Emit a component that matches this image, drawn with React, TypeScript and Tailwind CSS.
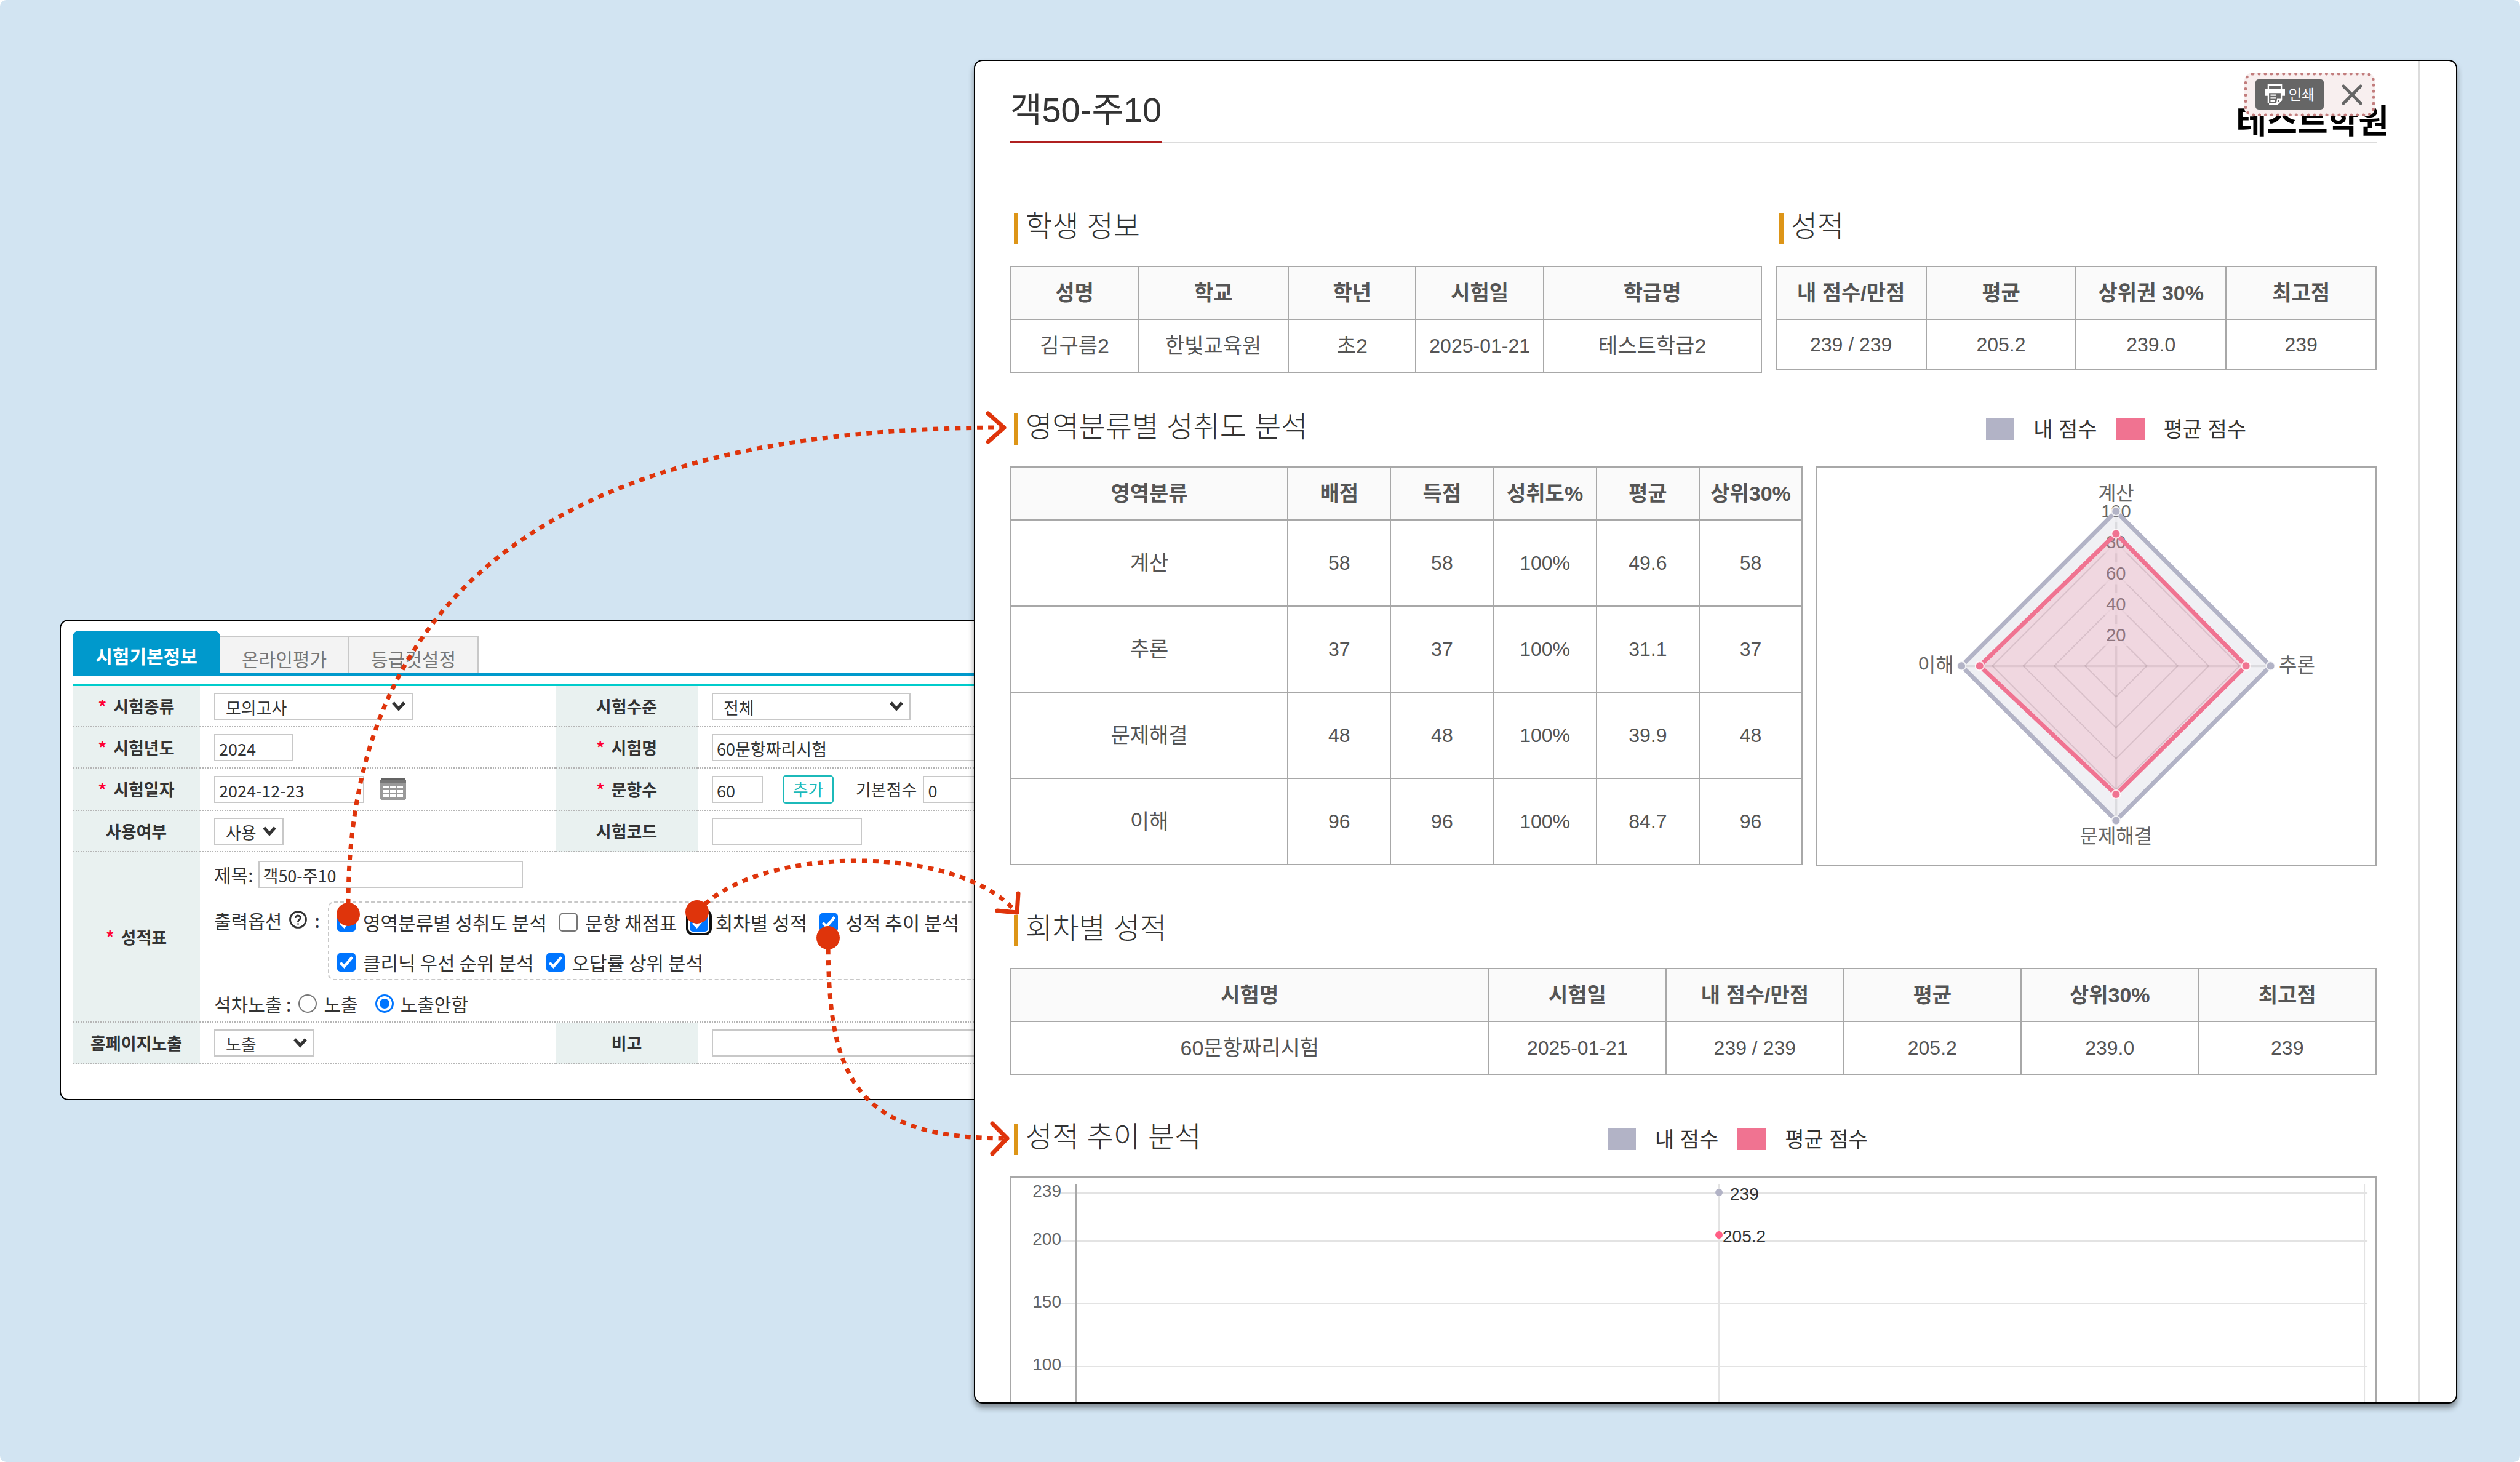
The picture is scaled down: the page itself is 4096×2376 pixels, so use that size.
import type { ReactNode } from "react";

const TABS = ["온라인평가", "등급컷설정"];

function Chevron() {
  return (
    <svg viewBox="0 0 22 16" className="pointer-events-none absolute right-[12px] top-1/2 h-[16px] w-[22px] -translate-y-1/2" fill="none" stroke="#333" strokeWidth="5">
      <path d="M2 2 L11 12 L20 2" />
    </svg>
  );
}

function SelectBox({ id, value, width }: { id: string; value: string; width: string }) {
  return (
    <span className={`relative inline-block align-middle ${width}`}>
      <select id={id} defaultValue={value} className="block h-[44px] w-full appearance-none border-2 border-[#c8c8c8] bg-white pl-[17px] pt-[4px] leading-[36px] text-[#333]">
        <option>{value}</option>
      </select>
      <Chevron />
    </span>
  );
}

function TextBox({ id, value = "", width, label }: { id: string; value?: string; width: string; label?: string }) {
  return (
    <input
      id={id}
      type="text"
      aria-label={label}
      defaultValue={value}
      className={`block h-[44px] border-2 border-[#c8c8c8] bg-white px-[6px] pt-[4px] text-[#333] ${width}`}
    />
  );
}

function FieldHead({ htmlFor, required, children }: { htmlFor: string; required?: boolean; children: ReactNode }) {
  return (
    <th scope="row" className="border-b-2 border-dotted border-[#b5b5b5] bg-[#e9f1f0] p-0 text-center align-middle font-bold">
      <label htmlFor={htmlFor} className="inline-flex items-center gap-[11px]">
        {required && <span className="text-[#ff0033]">*</span>}
        {children}
      </label>
    </th>
  );
}

function FieldCell({ span, children }: { span?: number; children?: ReactNode }) {
  return (
    <td colSpan={span} className="border-b-2 border-dotted border-[#b5b5b5] p-0 pl-[23px] align-middle">
      {children}
    </td>
  );
}

function Check({ label, checked, focused }: { label: string; checked?: boolean; focused?: boolean }) {
  return (
    <label className="flex items-center gap-[12px]">
      <span className="relative block size-[30px]">
        <input
          type="checkbox"
          defaultChecked={checked}
          className={`peer block size-[30px] appearance-none rounded-[5px] border-2 border-[#767676] bg-white checked:border-[#0075ff] checked:bg-[#0075ff] ${focused ? "outline-4 outline-offset-2 outline-[#101010]" : ""}`}
        />
        <svg viewBox="0 0 13 13" className="pointer-events-none absolute inset-0 hidden size-[30px] peer-checked:block" fill="none" stroke="#fff" strokeWidth="1.9">
          <path d="M2.3 6.8 L5 9.4 L10.6 2.8" />
        </svg>
      </span>
      {label}
    </label>
  );
}

function Radio({ label, checked }: { label: string; checked?: boolean }) {
  return (
    <label className="flex items-center gap-[11px]">
      <span className="relative block size-[30px]">
        <input type="radio" name="rank" defaultChecked={checked} className="peer block size-[30px] appearance-none rounded-full border-2 border-[#767676] bg-white checked:border-[3px] checked:border-[#0075ff]" />
        <span className="pointer-events-none absolute inset-[7px] hidden rounded-full bg-[#0075ff] peer-checked:block" />
      </span>
      {label}
    </label>
  );
}

function CalendarIcon() {
  return (
    <svg viewBox="0 0 18 15" className="h-[35px] w-[42px]" shapeRendering="crispEdges">
      <path d="M1 0h16v1h-16z" fill="#636363" />
      <path d="M0 1h18v2h-18z" fill="#777" />
      <path d="M0 3h18v11h-1v1h-16v-1h-1z" fill="#999" />
      {[5, 8, 11].map((y) => [2, 7, 12].map((x) => <rect key={`${x}-${y}`} x={x} y={y} width="4" height="2" fill="#fff" />))}
    </svg>
  );
}

function ExamForm() {
  return (
    <section className="mt-[910px] w-[38.13%] shrink-0 self-start overflow-hidden rounded-l-[14px] border-2 border-r-0 border-black bg-white pb-[57px] pl-[19px] pt-[16px] font-['Noto_Sans_CJK_KR',sans-serif] text-[27px] leading-[36px] text-[#333]">
      <nav className="flex h-[74px] items-end border-b-[5px] border-[#0099cc] text-[30px] leading-[40px]">
        <button type="button" className="-mb-[5px] h-[74px] w-[240px] rounded-t-[10px] bg-[#0099cc] pt-[6px] font-bold text-white">
          시험기본정보
        </button>
        {TABS.map((t) => (
          <button key={t} type="button" className="h-[60px] w-[210px] border-r-2 border-t-2 border-[#c8c8c8] bg-[#f3f3f3] pt-[10px] text-[#777]">
            {t}
          </button>
        ))}
      </nav>
      <table className="mt-[12px] w-full table-fixed border-separate border-spacing-0 whitespace-nowrap border-t-4 border-[#00cccc]">
        <colgroup>
          <col className="w-[207px]" />
          <col className="w-[578px]" />
          <col className="w-[231px]" />
          <col />
        </colgroup>
        <tbody>
          <tr className="h-[67px]">
            <FieldHead htmlFor="kind" required>시험종류</FieldHead>
            <FieldCell><SelectBox id="kind" value="모의고사" width="w-[323px]" /></FieldCell>
            <FieldHead htmlFor="level">시험수준</FieldHead>
            <FieldCell><SelectBox id="level" value="전체" width="w-[323px]" /></FieldCell>
          </tr>
          <tr className="h-[67px]">
            <FieldHead htmlFor="year" required>시험년도</FieldHead>
            <FieldCell><TextBox id="year" value="2024" width="w-[129px]" /></FieldCell>
            <FieldHead htmlFor="name" required>시험명</FieldHead>
            <FieldCell><div className="overflow-hidden"><TextBox id="name" value="60문항짜리시험" width="w-[600px]" /></div></FieldCell>
          </tr>
          <tr className="h-[69px]">
            <FieldHead htmlFor="date" required>시험일자</FieldHead>
            <FieldCell>
              <div className="flex items-center gap-[26px]">
                <TextBox id="date" value="2024-12-23" width="w-[244px]" />
                <button type="button" aria-label="달력"><CalendarIcon /></button>
              </div>
            </FieldCell>
            <FieldHead htmlFor="count" required>문항수</FieldHead>
            <FieldCell>
              <div className="flex items-center overflow-hidden">
                <TextBox id="count" value="60" width="w-[83px] shrink-0" />
                <button type="button" className="ml-[32px] h-[46px] w-[83px] shrink-0 rounded-[5px] border-2 border-[#1cb9b9] text-[#1cb9b9]">추가</button>
                <label htmlFor="base" className="ml-[36px] mr-[10px]">기본점수</label>
                <TextBox id="base" value="0" width="w-[129px] shrink-0" />
              </div>
            </FieldCell>
          </tr>
          <tr className="h-[67px]">
            <FieldHead htmlFor="use">사용여부</FieldHead>
            <FieldCell><SelectBox id="use" value="사용" width="w-[113px]" /></FieldCell>
            <FieldHead htmlFor="code">시험코드</FieldHead>
            <FieldCell><TextBox id="code" width="w-[244px]" /></FieldCell>
          </tr>
          <tr className="h-[277px]">
            <FieldHead htmlFor="title" required>성적표</FieldHead>
            <FieldCell span={3}>
              <div className="flex flex-col">
                <div className="flex items-center gap-[8px]">
                  <span className="text-[30px]">제목:</span>
                  <TextBox id="title" value="객50-주10" width="w-[430px]" />
                </div>
                <div className="mt-[22px] flex items-start text-[30px] leading-[44px]">
                  <div className="mt-[8px] flex w-[185px] shrink-0 items-center gap-[12px]">
                    출력옵션
                    <svg viewBox="1 1 22 22" className="size-[29px]" fill="none" stroke="#333" strokeWidth="2.2" strokeLinecap="round">
                      <circle cx="12" cy="12" r="9.8" />
                      <path d="M9.1 9a3 3 0 0 1 5.8 1c0 2-2.9 2.4-2.9 4.2" />
                      <path d="M12 17.4h.01" />
                    </svg>
                    :
                  </div>
                  <div className="flex min-w-0 flex-1 flex-col gap-[35px] overflow-hidden rounded-l-[10px] border-2 border-r-0 border-dashed border-[#c8c8c8] pb-[12px] pl-[13px] pt-[17px] text-[31px] leading-[30px]">
                    <div className="flex gap-[20px]">
                      <Check label="영역분류별 성취도 분석" checked />
                      <Check label="문항 채점표" />
                      <Check label="회차별 성적" checked focused />
                      <Check label="성적 추이 분석" checked />
                    </div>
                    <div className="flex gap-[20px]">
                      <Check label="클리닉 우선 순위 분석" checked />
                      <Check label="오답률 상위 분석" checked />
                    </div>
                  </div>
                </div>
                <div className="mt-[22px] flex items-center gap-[28px] text-[30px] leading-[32px]">
                  <div className="flex items-center gap-[12px]">
                    석차노출 :
                    <Radio label="노출" />
                  </div>
                  <Radio label="노출안함" checked />
                </div>
              </div>
            </FieldCell>
          </tr>
          <tr className="h-[67px]">
            <FieldHead htmlFor="home">홈페이지노출</FieldHead>
            <FieldCell><SelectBox id="home" value="노출" width="w-[163px]" /></FieldCell>
            <FieldHead htmlFor="memo">비고</FieldHead>
            <FieldCell><div className="overflow-hidden"><TextBox id="memo" width="w-[600px]" /></div></FieldCell>
          </tr>
        </tbody>
      </table>
    </section>
  );
}

function Heading({ children }: { children: ReactNode }) {
  return (
    <h2 className="ml-[6px] flex h-[51px] gap-[12px] whitespace-nowrap text-[47px] font-light leading-[44px] text-[#333]">
      <span className="h-[51px] w-[7px] bg-[#dd9517]" />
      {children}
    </h2>
  );
}

function Legend() {
  return (
    <ul className="flex h-[51px] items-center gap-[31px] whitespace-nowrap text-[34px] leading-[40px] text-[#333]">
      <li className="flex items-center gap-[31px]">
        <span className="h-[35px] w-[46px] bg-[#b2b3c6]" />내 점수
      </li>
      <li className="flex items-center gap-[31px]">
        <span className="h-[35px] w-[46px] bg-[#f07391]" />평균 점수
      </li>
    </ul>
  );
}

function Grid({ cols, head, rows, rowHeight }: { cols: string[]; head: string[]; rows: string[][]; rowHeight: string }) {
  return (
    <table className="w-full table-fixed border-collapse whitespace-nowrap text-center text-[#555]">
      <colgroup>
        {cols.map((c, i) => <col key={i} className={c} />)}
      </colgroup>
      <thead>
        <tr className="h-[86px] bg-[#fafafa] text-[34px] leading-[40px]">
          {head.map((h) => <th key={h} scope="col" className="border-2 border-[#a8a8a8] p-0 font-bold">{h}</th>)}
        </tr>
      </thead>
      <tbody>
        {rows.map((r) => (
          <tr key={r[0]} className={rowHeight}>
            {r.map((c, i) => (
              <td key={i} className={`border-2 border-[#a8a8a8] p-0 leading-[40px] ${/[가-힣]/.test(c) ? "text-[34px]" : "text-[32px]"}`}>{c}</td>
            ))}
          </tr>
        ))}
      </tbody>
    </table>
  );
}

const CX = 485;
const CY = 322;
const R = 251;
const diamond = (v: number[]) =>
  `${CX},${CY - R * v[0]} ${CX + R * v[1]},${CY} ${CX},${CY + R * v[2]} ${CX - R * v[3]},${CY}`;
const corners = (v: number[]) => [
  [CX, CY - R * v[0]],
  [CX + R * v[1], CY],
  [CX, CY + R * v[2]],
  [CX - R * v[3], CY],
];

function RadarChart() {
  const mine = [1, 1, 1, 1];
  const avg = [0.855, 0.841, 0.831, 0.882];
  return (
    <svg viewBox="0 0 906 646" className="block w-full">
      <g fill="none" stroke="#000" strokeOpacity="0.14" strokeWidth="2">
        {[0.2, 0.4, 0.6, 0.8, 1].map((s) => <polygon key={s} points={diamond([s, s, s, s])} />)}
        <path strokeWidth="4" strokeOpacity="0.1" d={`M${CX} ${CY - R}V${CY + R}M${CX - R} ${CY}H${CX + R}`} />
      </g>
      <g textAnchor="middle" fontSize="29" fill="#666">
        {[20, 40, 60, 80, 100].map((n) => (
          <g key={n}>
            <rect x={CX - 20} y={CY - (R * n) / 100 - 18} width="40" height="36" fill="#fff" fillOpacity="0.75" />
            <text x={CX} y={CY - (R * n) / 100 + 10}>{n}</text>
          </g>
        ))}
      </g>
      <g strokeLinejoin="round" strokeWidth="7">
        <polygon points={diamond(mine)} fill="#b2b3c6" fillOpacity="0.2" stroke="#b2b3c6" />
        <polygon points={diamond(avg)} fill="#f07391" fillOpacity="0.2" stroke="#f07391" />
      </g>
      <g stroke="#fff" strokeOpacity="0.8" strokeWidth="2">
        {corners(mine).map(([x, y], i) => <circle key={i} cx={x} cy={y} r="7" fill="#b2b3c6" />)}
        {corners(avg).map(([x, y], i) => <circle key={i} cx={x} cy={y} r="7" fill="#f07391" />)}
      </g>
      <g textAnchor="middle" fontSize="32" fill="#666">
        <text x={CX} y="53">계산</text>
        <text x={CX} y="610">문제해결</text>
        <text x="192" y="332">이해</text>
        <text x="779" y="332">추론</text>
      </g>
    </svg>
  );
}

function TrendChart() {
  const ticks: [number, string][] = [[25, "239"], [103, "200"], [205, "150"], [307, "100"]];
  return (
    <svg viewBox="0 0 2217 560" className="block w-full" fontSize="28">
      <g stroke="#e3e3e3" strokeWidth="2">
        {ticks.map(([y]) => <path key={y} d={`M81 ${y}H2204`} />)}
        <path d="M1150 10V511M2199 10V511" />
      </g>
      <path d="M105 10V511" stroke="#a8a8a8" strokeWidth="2" />
      <g fill="#666" textAnchor="end">
        {ticks.map(([y, t]) => <text key={t} x="81" y={y + 6}>{t}</text>)}
      </g>
      <circle cx="1150" cy="24" r="6" fill="#b2b3c6" />
      <circle cx="1150" cy="93" r="6" fill="#ff5f85" />
      <g fill="#333">
        <text x="1168" y="36">239</text>
        <text x="1156" y="105">205.2</text>
      </g>
    </svg>
  );
}

function PrintIcon() {
  return (
    <svg viewBox="0 0 14 14" className="size-[33px]">
      <path d="M2 0h10v3h2v5h-2v3l-3 3h-6v-1h-1v-5h-2v-5h2z" fill="#fff" />
      <path d="M3 1h8v2h-8zM3 6h8v4h-2.5l-.5 3h-5z" fill="#666" />
      <path d="M4 7h4v1h-4zM4 9h4v1h-4zM4 11h3v1h-3z" fill="#fff" />
      <path d="M9 11h1v1h-1z" fill="#666" />
    </svg>
  );
}

function Report() {
  const w = "w-[13%]";
  return (
    <section className="min-w-0 flex-1 overflow-hidden rounded-[14px] border-2 border-black bg-white font-['Liberation_Sans','Noto_Sans_CJK_KR',sans-serif] shadow-[0_7px_10px_rgba(0,0,0,0.4)]">
      <div className="mr-[59px] h-full border-r-2 border-[#dcdcdc] pl-[57px] pr-[68px]">
        <header className="relative flex items-end justify-between border-b-2 border-[#dcdcdc] pt-[30px]">
          <h1 className="-mb-[2px] h-[104px] whitespace-nowrap border-b-4 border-[#b02020] text-[56px] leading-[100px] text-[#333]">객50-주10</h1>
          <strong className="-mr-[20px] mb-[3px] whitespace-nowrap text-[54px] leading-[60px] text-black">테스트학원</strong>
          <div className="absolute right-[3px] top-[19px] flex h-[71px] w-[212px] items-center justify-between rounded-[14px] border-[5px] border-dotted border-[#c27d7d] bg-[#f8efef] pl-[13px] pr-[15px]">
            <button type="button" className="flex h-[49px] w-[111px] items-center justify-center gap-[6px] rounded-[5px] bg-[#666] text-[23px] leading-[32px] text-white">
              <PrintIcon />
              인쇄
            </button>
            <button type="button" aria-label="닫기">
              <svg viewBox="0 0 14 14" className="size-[34px]" stroke="#666" strokeWidth="2" strokeLinecap="round">
                <path d="M1.2 1.2L12.8 12.8M12.8 1.2L1.2 12.8" />
              </svg>
            </button>
          </div>
        </header>

        <div className="mt-[113px] flex items-start justify-between">
          <div className="w-[55%]">
            <Heading>학생 정보</Heading>
            <div className="mt-[35px]">
              <Grid
                cols={["w-[17%]", "w-[20%]", "w-[17%]", "w-[17%]", "w-[29%]"]}
                head={["성명", "학교", "학년", "시험일", "학급명"]}
                rows={[["김구름2", "한빛교육원", "초2", "2025-01-21", "테스트학급2"]]}
                rowHeight="h-[86px]"
              />
            </div>
          </div>
          <div className="w-[44%]">
            <Heading>성적</Heading>
            <div className="mt-[35px]">
              <Grid
                cols={["w-1/4", "w-1/4", "w-1/4", "w-1/4"]}
                head={["내 점수/만점", "평균", "상위권 30%", "최고점"]}
                rows={[["239 / 239", "205.2", "239.0", "239"]]}
                rowHeight="h-[82px]"
              />
            </div>
          </div>
        </div>

        <div className="mt-[66px] flex items-start justify-between">
          <div className="w-[58%]">
            <Heading>영역분류별 성취도 분석</Heading>
            <div className="mt-[35px]">
              <Grid
                cols={["w-[35%]", w, w, w, w, w]}
                head={["영역분류", "배점", "득점", "성취도%", "평균", "상위30%"]}
                rows={[
                  ["계산", "58", "58", "100%", "49.6", "58"],
                  ["추론", "37", "37", "100%", "31.1", "37"],
                  ["문제해결", "48", "48", "100%", "39.9", "48"],
                  ["이해", "96", "96", "100%", "84.7", "96"],
                ]}
                rowHeight="h-[140px]"
              />
            </div>
          </div>
          <div className="w-[41%]">
            <div className="flex justify-center pl-[64px]"><Legend /></div>
            <div className="mt-[35px] border-2 border-[#a8a8a8]"><RadarChart /></div>
          </div>
        </div>

        <div className="mt-[79px]">
          <Heading>회차별 성적</Heading>
          <div className="mt-[35px]">
            <Grid
              cols={["w-[35%]", w, w, w, w, w]}
              head={["시험명", "시험일", "내 점수/만점", "평균", "상위30%", "최고점"]}
              rows={[["60문항짜리시험", "2025-01-21", "239 / 239", "205.2", "239.0", "239"]]}
              rowHeight="h-[86px]"
            />
          </div>
        </div>

        <div className="mt-[79px]">
          <div className="flex">
            <div className="w-[971px]"><Heading>성적 추이 분석</Heading></div>
            <Legend />
          </div>
          <div className="mt-[35px] border-2 border-[#a8a8a8]"><TrendChart /></div>
        </div>
      </div>
    </section>
  );
}

function Arrows() {
  return (
    <svg viewBox="0 0 4096 2376" className="pointer-events-none absolute inset-0 h-full w-full" fill="none" stroke="#df340b" strokeWidth="7">
      <g strokeDasharray="9 9">
        <path d="M566 1470Q566 695 1630 695" />
        <path d="M1133 1482C1230 1371 1560 1371 1652 1483" />
        <path d="M1346 1524C1346 1740 1380 1850 1634 1850" />
      </g>
      <g strokeLinecap="round" strokeLinejoin="round">
        <path d="M1606 672L1632 695L1606 718" />
        <path d="M1655 1452L1653 1483L1621 1480" />
        <path d="M1613 1826L1637 1850L1613 1875" />
      </g>
      <g fill="#df340b" stroke="none">
        <circle cx="566" cy="1486" r="19" />
        <circle cx="1133" cy="1482" r="19" />
        <circle cx="1346" cy="1524" r="19" />
      </g>
    </svg>
  );
}

export default function App() {
  return (
    <main className="relative flex h-screen overflow-hidden rounded-[10px] bg-[#d2e4f2] pb-[95px] pl-[97px] pr-[102px] pt-[97px]">
      <ExamForm />
      <Report />
      <Arrows />
    </main>
  );
}
